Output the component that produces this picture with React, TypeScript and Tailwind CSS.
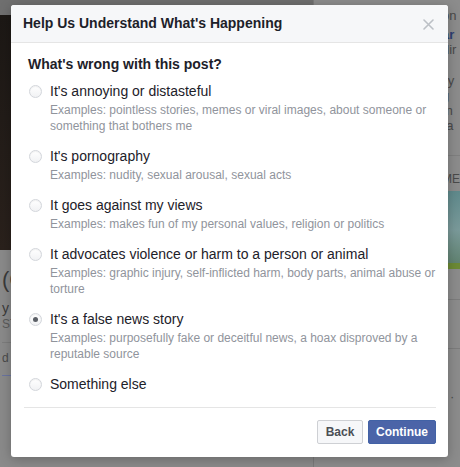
import React from "react";

const items = [
  {
    label: "It's annoying or distasteful",
    desc: "Examples: pointless stories, memes or viral images, about someone or something that bothers me",
  },
  { label: "It's pornography", desc: "Examples: nudity, sexual arousal, sexual acts" },
  { label: "It goes against my views", desc: "Examples: makes fun of my personal values, religion or politics" },
  {
    label: "It advocates violence or harm to a person or animal",
    desc: "Examples: graphic injury, self-inflicted harm, body parts, animal abuse or torture",
  },
  {
    label: "It's a false news story",
    desc: "Examples: purposefully fake or deceitful news, a hoax disproved by a reputable source",
    checked: true,
  },
  { label: "Something else" },
];

function Radio({ checked }: { checked?: boolean }) {
  return (
    <div className="mt-[3px] flex h-[13px] w-[13px] shrink-0 items-center justify-center rounded-full border border-[#d3d6db] bg-gradient-to-b from-white to-[#f1f2f4] shadow-[inset_0_1px_1px_rgba(0,0,0,0.06)]">
      {checked && <div className="h-[5px] w-[5px] rounded-full bg-[#5b5f66]" />}
    </div>
  );
}

export default function App() {
  return (
    <div
      className="relative h-[467px] w-[460px] overflow-hidden bg-[#878787]"
      style={{ fontFamily: '"Liberation Sans", Arial, Helvetica, sans-serif' }}
    >
      {/* dimmed page behind */}
      <div className="flex h-full w-full">
        <div className="flex w-[316px] flex-col">
          <div className="h-[15px] bg-[#6f6f6f]" />
          <div className="h-[235px] bg-gradient-to-b from-[#1c1815] to-[#2a211c]" />
          <div className="flex flex-1 flex-col bg-[#8a8a8a] pl-[2px] text-[#3a3a3a]">
            <div className="mt-[16px] text-[22px] leading-[28px]">(C</div>
            <div className="mt-[6px] text-[14px] leading-[16px]">y c</div>
            <div className="text-[12px] leading-[16px] text-[#5a5a5a]">ST</div>
            <div className="mt-[10px] h-px bg-[#7c7c7c]" />
            <div className="mt-[8px] text-[12px] leading-[14px] text-[#4a4a4a]">d ·</div>
            <div className="mt-[10px] h-px bg-[#6a74a0]" />
          </div>
        </div>
        <div className="flex flex-1 flex-col border-l border-[#7a7a7a] bg-[#8c8c8c] pl-[128px] text-[13px] leading-[15px] text-[#4a4a4a]">
          <div className="h-[6px]" />
          <div className="mt-[2px]">on</div>
          <div className="mt-[4px] font-bold text-[#2e3f73]">ar</div>
          <div>dir</div>
          <div className="mt-[16px]">ily</div>
          <div>g m</div>
          <div>ra</div>
          <div className="mt-[22px] -ml-[130px] h-px bg-[#7f7f7f]" />
          <div className="mt-[16px] text-[12px]">ME</div>
          <div className="mt-[4px] -ml-[130px] h-[78px] bg-gradient-to-b from-[#5f8a8c] via-[#7a9a9a] to-[#5d7f6a]">
            <div className="mt-[72px] h-[6px] bg-[#6c8a35]" />
          </div>
          <div className="mt-[30px] -ml-[130px] h-px bg-[#7c7c7c]" />
          <div className="mt-[48px] -ml-[130px] h-px bg-[#7c7c7c]" />
          <div className="mt-[40px]">· ·</div>
        </div>
      </div>

      {/* dialog */}
      <div className="absolute left-[11px] top-[5px] flex h-[452px] w-[437px] flex-col overflow-hidden rounded-[3px] bg-white shadow-[0_2px_12px_rgba(0,0,0,0.25)]">
        <div className="flex h-[38px] shrink-0 items-center justify-between border-b border-[#e5e5e5] bg-[#f6f7f9] pl-[12px] pr-[14px]">
          <div className="text-[14px] font-bold text-[#1d2129]">Help Us Understand What's Happening</div>
          <svg width="11" height="11" viewBox="0 0 11 11" className="mt-[1px]">
            <path d="M1 1 L10 10 M10 1 L1 10" stroke="#bcc0c6" strokeWidth="1.6" strokeLinecap="round" />
          </svg>
        </div>
        <div className="flex flex-1 flex-col px-[12px] pt-[12px]">
          <div className="pl-[5px] text-[14px] font-bold leading-[18px] text-[#1d2129]">What's wrong with this post?</div>
          <div className="mt-[9px] flex flex-col gap-[13px] pl-[6px]">
            {items.map((it) => (
              <div key={it.label} className="flex gap-[8px]">
                <Radio checked={it.checked} />
                <div className="flex flex-col">
                  <div className="text-[14px] leading-[18px] text-[#1d2129]">{it.label}</div>
                  {it.desc && (
                    <div className="mt-[2px] text-[12px] leading-[16px] text-[#90949c]">{it.desc}</div>
                  )}
                </div>
              </div>
            ))}
          </div>
          <div className="mt-[14px] ml-[1px] h-px bg-[#e5e5e5]" />
          <div className="flex justify-end gap-[5px] pt-[12px]">
            <button className="h-[24px] w-[46px] rounded-[2px] border border-[#ced0d4] bg-[#f6f7f9] text-[12px] font-bold text-[#4b4f56]">
              Back
            </button>
            <button className="h-[24px] w-[68px] rounded-[2px] border border-[#4262a6] bg-[#4b64a8] text-[12px] font-bold text-white">
              Continue
            </button>
          </div>
        </div>
      </div>
    </div>
  );
}
